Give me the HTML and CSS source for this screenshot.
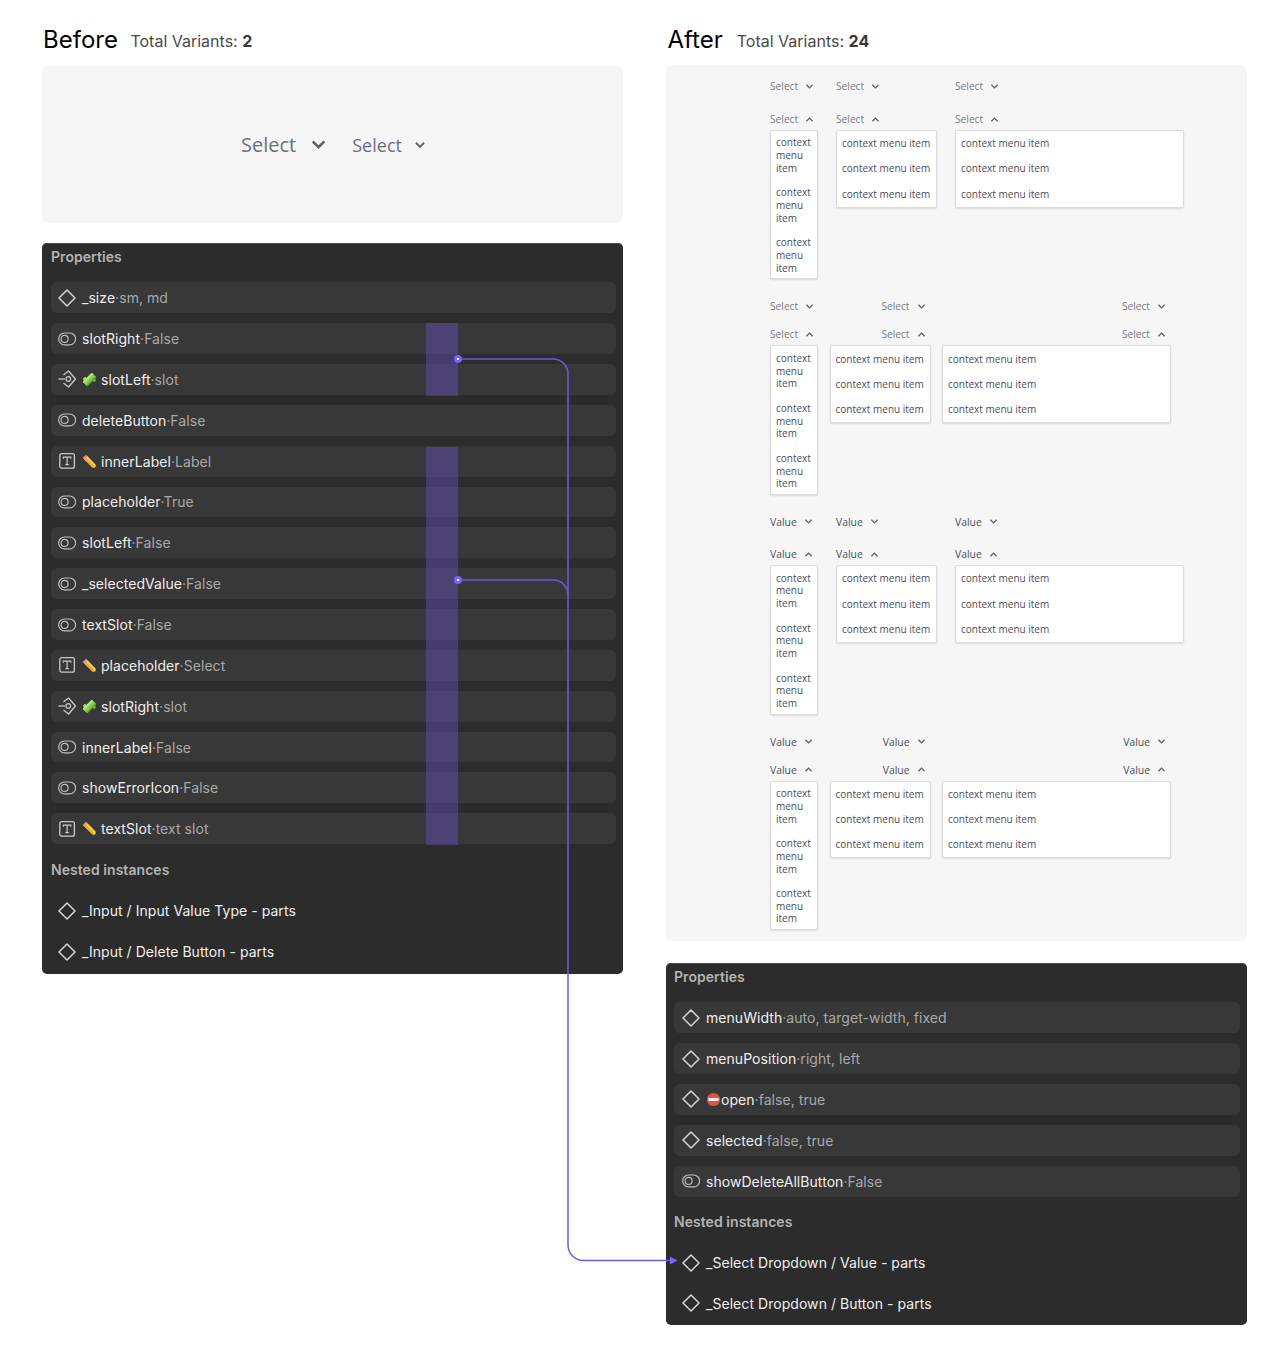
FILE: index.html
```html
<!DOCTYPE html>
<html lang="en">
<head>
<meta charset="utf-8">
<title>Select Dropdown variants</title>
<link rel="stylesheet" href="styles.css">
</head>
<body>
<svg class="defs" width="0" height="0" aria-hidden="true">
  <symbol id="i-diamond" viewBox="0 0 18 18"><path d="M9 1 17 9 9 17 1 9Z" fill="none" stroke="#d6d6d6" stroke-width="1.5" stroke-linejoin="round"/></symbol>
  <symbol id="i-toggle" viewBox="0 0 18 18"><rect x="0.6" y="3" width="17" height="11.800" rx="5.900" fill="none" stroke="#bdbdbd" stroke-width="1.200"/><circle cx="6.600" cy="8.900" r="3.500" fill="none" stroke="#bdbdbd" stroke-width="1.200"/></symbol>
  <symbol id="i-text" viewBox="0 0 18 18"><rect x="1.800" y="1.600" width="14.600" height="14.600" rx="2" fill="none" stroke="#c8c8c8" stroke-width="1.300"/><path d="M5.400 6.800V5.200h7.400v1.600M9.100 5.200v7.400M7.400 12.600h3.400" fill="none" stroke="#c8c8c8" stroke-width="1.200"/></symbol>
  <symbol id="i-slot" viewBox="0 0 18 18"><path d="M5.500 5 10.500 1 17.500 9l-7 8L5.500 13" fill="none" stroke="#c8c8c8" stroke-width="1.300" stroke-linejoin="round"/><path d="M.5 9h6.500" stroke="#c8c8c8" stroke-width="1.300"/><circle cx="10.300" cy="9" r="2.300" fill="none" stroke="#c8c8c8" stroke-width="1.200"/></symbol>
  <symbol id="i-puzzle" viewBox="0 0 16 16">
    <g transform="rotate(-45 8 8)">
      <rect x="1" y="4.600" width="14" height="6.800" rx="1" fill="#88cc4c"/>
      <circle cx="5" cy="4.200" r="2" fill="#a6e066"/>
      <circle cx="11" cy="11.800" r="2" fill="#6fb03c"/>
      <rect x="1" y="4.600" width="14" height="2.400" rx="1" fill="#b2ea78"/>
      <rect x="1" y="10" width="14" height="1.400" rx=".6" fill="#64a035"/>
    </g>
  </symbol>
  <symbol id="i-pencil" viewBox="0 0 16 16">
    <path d="M5.700 2.200 2.200 5.700 11.100 14.500l4.100.8-.8-4.100Z" fill="#f8cf4a"/>
    <path d="M2.200 5.700 4 3.900 12.900 12.800 11.100 14.500Z" fill="#eda62c"/>
    <path d="M.7 4.200 4.200.7 5.900 2.400 2.400 5.900Z" fill="#ee8f9c"/>
    <path d="M13 15 15 13l.3 2.300Z" fill="#333"/>
  </symbol>
  <symbol id="i-noentry" viewBox="0 0 16 16"><circle cx="8" cy="8" r="7" fill="#e2533f"/><rect x="2.600" y="6.400" width="10.800" height="3.200" rx=".5" fill="#f4f4f4"/></symbol>
  <symbol id="i-down" viewBox="0 0 16 16"><path d="M2.500 5 8 10.500 13.500 5" fill="none" stroke="currentColor" stroke-width="2.400"/></symbol>
  <symbol id="i-up" viewBox="0 0 16 16"><path d="M2.500 11 8 5.500 13.500 11" fill="none" stroke="currentColor" stroke-width="2.400"/></symbol>
</svg>

<div class="page">
  <section class="col">
    <header class="head"><h2 class="title">Before</h2><p class="total">Total Variants: <b>2</b></p></header>
    <div class="stage before">
      <span class="sel-lg">Select<svg class="chev-lg"><use href="#i-down"/></svg></span>
      <span class="sel-md">Select<svg class="chev-md"><use href="#i-down"/></svg></span>
    </div>
    <div class="props">
      <div class="label-row">Properties</div>
      <div class="row"><svg class="ico"><use href="#i-diamond"/></svg><span class="name">_size</span><span class="val">·sm, md</span></div>
      <div class="row"><svg class="ico"><use href="#i-toggle"/></svg><span class="name">slotRight</span><span class="val">·False</span></div>
      <div class="row"><svg class="ico"><use href="#i-slot"/></svg><svg class="emo"><use href="#i-puzzle"/></svg><span class="name">slotLeft</span><span class="val">·slot</span></div>
      <div class="row"><svg class="ico"><use href="#i-toggle"/></svg><span class="name">deleteButton</span><span class="val">·False</span></div>
      <div class="row"><svg class="ico"><use href="#i-text"/></svg><svg class="emo"><use href="#i-pencil"/></svg><span class="name">innerLabel</span><span class="val">·Label</span></div>
      <div class="row"><svg class="ico"><use href="#i-toggle"/></svg><span class="name">placeholder</span><span class="val">·True</span></div>
      <div class="row"><svg class="ico"><use href="#i-toggle"/></svg><span class="name">slotLeft</span><span class="val">·False</span></div>
      <div class="row"><svg class="ico"><use href="#i-toggle"/></svg><span class="name">_selectedValue</span><span class="val">·False</span></div>
      <div class="row"><svg class="ico"><use href="#i-toggle"/></svg><span class="name">textSlot</span><span class="val">·False</span></div>
      <div class="row"><svg class="ico"><use href="#i-text"/></svg><svg class="emo"><use href="#i-pencil"/></svg><span class="name">placeholder</span><span class="val">·Select</span></div>
      <div class="row"><svg class="ico"><use href="#i-slot"/></svg><svg class="emo"><use href="#i-puzzle"/></svg><span class="name">slotRight</span><span class="val">·slot</span></div>
      <div class="row"><svg class="ico"><use href="#i-toggle"/></svg><span class="name">innerLabel</span><span class="val">·False</span></div>
      <div class="row"><svg class="ico"><use href="#i-toggle"/></svg><span class="name">showErrorIcon</span><span class="val">·False</span></div>
      <div class="row"><svg class="ico"><use href="#i-text"/></svg><svg class="emo"><use href="#i-pencil"/></svg><span class="name">textSlot</span><span class="val">·text slot</span></div>
      <div class="label-row nested">Nested instances</div>
      <div class="row plain"><svg class="ico"><use href="#i-diamond"/></svg><span class="name">_Input / Input Value Type - parts</span></div>
      <div class="row plain"><svg class="ico"><use href="#i-diamond"/></svg><span class="name">_Input / Delete Button - parts</span></div>
    </div>
  </section>

  <section class="col after">
    <header class="head"><h2 class="title">After</h2><p class="total">Total Variants: <b>24</b></p></header>
    <div class="stage grid">

      <div class="set">
        <div class="cell c1"><span class="sel">Select<svg class="chev"><use href="#i-down"/></svg></span><span class="sel o1">Select<svg class="chev"><use href="#i-up"/></svg></span>
          <div class="menu narrow"><div class="item">context menu item</div><div class="item">context menu item</div><div class="item">context menu item</div></div></div>
        <div class="cell c2"><span class="sel">Select<svg class="chev"><use href="#i-down"/></svg></span><span class="sel o1">Select<svg class="chev"><use href="#i-up"/></svg></span>
          <div class="menu"><div class="item">context menu item</div><div class="item">context menu item</div><div class="item">context menu item</div></div></div>
        <div class="cell c3"><span class="sel">Select<svg class="chev"><use href="#i-down"/></svg></span><span class="sel o1">Select<svg class="chev"><use href="#i-up"/></svg></span>
          <div class="menu"><div class="item">context menu item</div><div class="item">context menu item</div><div class="item">context menu item</div></div></div>
      </div>

      <div class="set right">
        <div class="cell c1"><span class="sel">Select<svg class="chev"><use href="#i-down"/></svg></span><span class="sel o2">Select<svg class="chev"><use href="#i-up"/></svg></span>
          <div class="menu narrow"><div class="item">context menu item</div><div class="item">context menu item</div><div class="item">context menu item</div></div></div>
        <div class="cell c2"><span class="sel">Select<svg class="chev"><use href="#i-down"/></svg></span><span class="sel o2">Select<svg class="chev"><use href="#i-up"/></svg></span>
          <div class="menu"><div class="item">context menu item</div><div class="item">context menu item</div><div class="item">context menu item</div></div></div>
        <div class="cell c3"><span class="sel">Select<svg class="chev"><use href="#i-down"/></svg></span><span class="sel o2">Select<svg class="chev"><use href="#i-up"/></svg></span>
          <div class="menu"><div class="item">context menu item</div><div class="item">context menu item</div><div class="item">context menu item</div></div></div>
      </div>

      <div class="set">
        <div class="cell c1"><span class="sel value">Value<svg class="chev"><use href="#i-down"/></svg></span><span class="sel value o3">Value<svg class="chev"><use href="#i-up"/></svg></span>
          <div class="menu narrow"><div class="item">context menu item</div><div class="item">context menu item</div><div class="item">context menu item</div></div></div>
        <div class="cell c2"><span class="sel value">Value<svg class="chev"><use href="#i-down"/></svg></span><span class="sel value o3">Value<svg class="chev"><use href="#i-up"/></svg></span>
          <div class="menu"><div class="item">context menu item</div><div class="item">context menu item</div><div class="item">context menu item</div></div></div>
        <div class="cell c3"><span class="sel value">Value<svg class="chev"><use href="#i-down"/></svg></span><span class="sel value o3">Value<svg class="chev"><use href="#i-up"/></svg></span>
          <div class="menu"><div class="item">context menu item</div><div class="item">context menu item</div><div class="item">context menu item</div></div></div>
      </div>

      <div class="set right">
        <div class="cell c1"><span class="sel value">Value<svg class="chev"><use href="#i-down"/></svg></span><span class="sel value o2">Value<svg class="chev"><use href="#i-up"/></svg></span>
          <div class="menu narrow"><div class="item">context menu item</div><div class="item">context menu item</div><div class="item">context menu item</div></div></div>
        <div class="cell c2"><span class="sel value">Value<svg class="chev"><use href="#i-down"/></svg></span><span class="sel value o2">Value<svg class="chev"><use href="#i-up"/></svg></span>
          <div class="menu"><div class="item">context menu item</div><div class="item">context menu item</div><div class="item">context menu item</div></div></div>
        <div class="cell c3"><span class="sel value">Value<svg class="chev"><use href="#i-down"/></svg></span><span class="sel value o2">Value<svg class="chev"><use href="#i-up"/></svg></span>
          <div class="menu"><div class="item">context menu item</div><div class="item">context menu item</div><div class="item">context menu item</div></div></div>
      </div>

    </div>
    <div class="props">
      <div class="label-row">Properties</div>
      <div class="row"><svg class="ico"><use href="#i-diamond"/></svg><span class="name">menuWidth</span><span class="val">·auto, target-width, fixed</span></div>
      <div class="row"><svg class="ico"><use href="#i-diamond"/></svg><span class="name">menuPosition</span><span class="val">·right, left</span></div>
      <div class="row"><svg class="ico"><use href="#i-diamond"/></svg><svg class="emo tight"><use href="#i-noentry"/></svg><span class="name">open</span><span class="val">·false, true</span></div>
      <div class="row"><svg class="ico"><use href="#i-diamond"/></svg><span class="name">selected</span><span class="val">·false, true</span></div>
      <div class="row"><svg class="ico"><use href="#i-toggle"/></svg><span class="name">showDeleteAllButton</span><span class="val">·False</span></div>
      <div class="label-row nested">Nested instances</div>
      <div class="row plain"><svg class="ico"><use href="#i-diamond"/></svg><span class="name">_Select Dropdown / Value - parts</span></div>
      <div class="row plain"><svg class="ico"><use href="#i-diamond"/></svg><span class="name">_Select Dropdown / Button - parts</span></div>
    </div>
  </section>

  <svg class="links" viewBox="0 0 1280 1361" width="1280" height="1361" aria-hidden="true">
    <rect class="band" x="426" y="323" width="32" height="73"/>
    <rect class="band" x="426" y="447" width="32" height="398"/>
    <path class="wire" d="M458 359H553a15 15 0 0 1 15 15V1245a15.500 15.500 0 0 0 15.500 15.500H672"/>
    <path class="wire" d="M458 580H553a15 15 0 0 1 15 15"/>
    <path class="tip" d="M670 1256.500 677.500 1260.500 670 1264.500Z"/>
    <circle class="dot" cx="458" cy="359" r="4"/><rect class="pip" x="457" y="358" width="2" height="2"/>
    <circle class="dot" cx="458" cy="580" r="4"/><rect class="pip" x="457" y="579" width="2" height="2"/>
  </svg>
</div>
</body>
</html>
```
FILE: styles.css
```css
* { box-sizing: border-box; }
html, body { margin: 0; padding: 0; background: #fff; }
body { font-family: Inter, "Liberation Sans", sans-serif; width: 1280px; height: 1361px; overflow: hidden; }
.defs { position: absolute; }

.page {
  position: relative;
  display: grid;
  grid-template-columns: 581px 581px;
  column-gap: 43px;
  align-items: start;
  padding: 24px 0 0 42px;
  width: 1280px;
  height: 1361px;
}
.col { display: flex; flex-direction: column; }

.head { display: flex; align-items: flex-start; gap: 12.5px; height: 42px; padding: 0 0 0 1px; }
.after .head { height: 41px; padding-left: 1.5px; gap: 14px; }
.title { margin: 1px 0 0; font-family: Inter, sans-serif; font-weight: 400; font-size: 24px; line-height: 30px; color: #000; }
.total { margin: 8px 0 0; font-family: Inter, sans-serif; font-size: 16px; line-height: 19px; color: #4a4a4a; }
.total b { font-weight: 700; color: #3a3a3a; }

.stage { background: #f6f6f6; border-radius: 6px; }
.before {
  height: 157px;
  display: flex;
  align-items: center;
  justify-content: center;
  gap: 25px;
  padding-left: 2px;
  font-family: "Open Sans", sans-serif;
  color: #6d6f7b;
}
.sel-lg { display: inline-flex; align-items: center; gap: 14px; font-size: 20px; }
.sel-md { display: inline-flex; align-items: center; gap: 12px; font-size: 18px; }
.chev-lg { width: 17px; height: 17px; color: #5d5f6b; }
.chev-md { width: 12px; height: 12px; color: #5d5f6b; }

.grid { height: 876px; padding: 14px 0 0 104px; display: flex; flex-direction: column; gap: 20px; }
.set { display: flex; gap: 18px; font-family: "Open Sans", sans-serif; }
.set.right { gap: 11.5px; }
.cell { display: flex; flex-direction: column; align-items: flex-start; }
.c1 { width: 48px; }
.c2 { width: 101px; }
.c3 { width: 229px; }
.set.right .cell { align-items: stretch; }
.set.right .c2 .sel, .set.right .c3 .sel { justify-content: flex-end; padding-right: 5px; }

.sel { display: flex; align-items: center; gap: 7px; height: 14px; font-size: 10.2px; line-height: 14px; color: #7a7c87; }
.sel.value { color: #4b4d58; font-size: 10.4px; }
.chev { width: 9px; height: 9px; color: #5d5f6b; }
.o1 { margin-top: 19px; }
.o2 { margin-top: 14px; }
.o3 { margin-top: 18.5px; }

.menu {
  align-self: stretch;
  margin-top: 4px;
  background: #fff;
  border: 1px solid #dcdcdc;
  border-radius: 2px;
  box-shadow: 0 1px 2px rgba(0,0,0,.12);
  font-size: 10px;
  line-height: 12.8px;
  color: #4b4d58;
}
.item { padding: 6.2px 5px; }
.narrow .item { padding: 5.8px 5px; }
.narrow .item:first-child { padding-top: 5.4px; }
.narrow .item:last-child { padding-bottom: 3.6px; }

.props {
  margin-top: 20px;
  background: #2c2c2c;
  border-radius: 5px;
  box-shadow: inset 0 1px 0 #4c4c4c;
  padding: 0 7px 6.6px 9px;
  display: flex;
  flex-direction: column;
  gap: 10px;
  font-size: 14px;
  letter-spacing: .05px;
}
.after .props { margin-top: 22px; padding-left: 8px; padding-bottom: 5.9px; }
.label-row { height: 29.35px; line-height: 28px; font-weight: 600; color: #b4b4b4; }
.label-row.nested { height: 31.2px; line-height: 31px; }
.after .label-row.nested { height: 30.6px; line-height: 30px; }
.row {
  height: 30.85px;
  display: flex;
  align-items: center;
  padding-left: 7px;
  background: #383838;
  border-radius: 6px;
}
.after .row { padding-left: 8px; }
.row.plain { background: none; }
.ico { width: 18px; height: 18px; flex: none; margin-right: 6px; }
.emo { width: 15px; height: 15px; flex: none; margin-right: 4px; }
.emo.tight { margin-right: 0; }
.name { color: #efefef; white-space: pre; }
.val { color: #a8a8a8; white-space: pre; }

.links { position: absolute; left: 0; top: 0; pointer-events: none; }
.band { fill: rgba(110, 85, 220, .38); }
.wire { fill: none; stroke: #6f58e0; stroke-width: 1.5; }
.tip, .dot { fill: #7b61ff; }
.pip { fill: #fff; }
```
